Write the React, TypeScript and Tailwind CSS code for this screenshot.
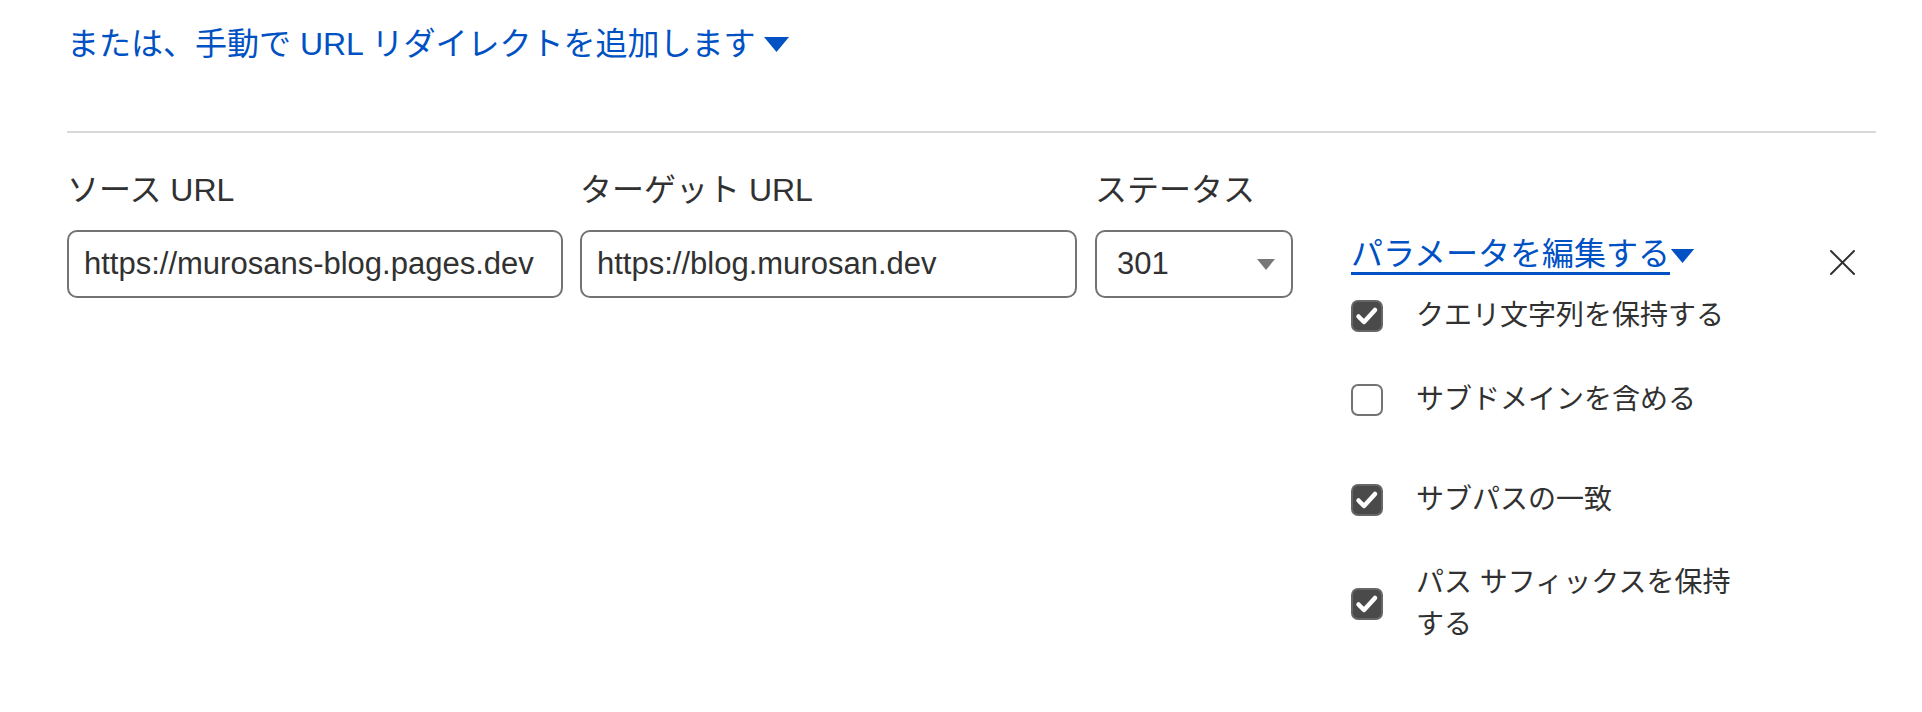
import type { ReactNode } from 'react'

function Caret({ className }: { className: string }) {
  return (
    <svg className={className} viewBox="0 0 25 15" aria-hidden="true">
      <path d="M0 0H25L12.5 15Z" fill="currentColor" />
    </svg>
  )
}

function Box({ checked }: { checked: boolean }) {
  if (!checked)
    return <span className="h-[32px] w-[32px] shrink-0 rounded-[7px] border-2 border-[#737373] bg-white" />
  return (
    <span className="flex h-[32px] w-[32px] shrink-0 items-center justify-center rounded-[7px] border-2 border-[#666] bg-[#4a4a4a]">
      <svg viewBox="0 0 28 28" className="h-[28px] w-[28px]" aria-hidden="true">
        <path
          d="M5.5 14.5L11 20L22 8"
          fill="none"
          stroke="white"
          strokeWidth="4.5"
          strokeLinecap="round"
          strokeLinejoin="round"
        />
      </svg>
    </span>
  )
}

function Option({ checked, children, className = '' }: { checked: boolean; children: ReactNode; className?: string }) {
  return (
    <label className={`flex items-center gap-[33px] ${className}`}>
      <Box checked={checked} />
      <span className="w-[340px] text-[28px] leading-[42px] text-[#313131]">{children}</span>
    </label>
  )
}

export default function App() {
  const inputCls =
    'mt-[16px] h-[68px] w-full rounded-[10px] border-2 border-[#737373] bg-white px-[15px] text-[31px] text-[#313131] outline-none'

  return (
    <div className="h-[712px] w-[1922px] overflow-hidden bg-white pl-[67px] pr-[46px] font-['Liberation_Sans','Noto_Sans_CJK_JP',sans-serif] text-[#313131]">
      <div className="pt-[20px]">
        <button type="button" className="flex items-center text-[32px] leading-[48px] text-[#0051c3]">
          または、手動で URL リダイレクトを追加します
          <Caret className="ml-[8px] h-[15px] w-[25px]" />
        </button>
      </div>

      <div className="mt-[63px] h-[2px] bg-[#d9d9d9]" />

      <div className="mt-[33px] flex items-start">
        <div className="w-[496px]">
          <div className="text-[32px] leading-[48px]">ソース URL</div>
          <input className={inputCls} defaultValue="https://murosans-blog.pages.dev" />
        </div>
        <div className="ml-[17px] w-[497px]">
          <div className="text-[32px] leading-[48px]">ターゲット URL</div>
          <input className={inputCls} defaultValue="https://blog.murosan.dev" />
        </div>
        <div className="ml-[18px] w-[198px]">
          <div className="text-[32px] leading-[48px]">ステータス</div>
          <div className="mt-[16px] flex h-[68px] items-center justify-between rounded-[10px] border-2 border-[#737373] pl-[20px] pr-[16px] text-[31px]">
            301
            <Caret className="h-[11px] w-[18px] text-[#777]" />
          </div>
        </div>

        <div className="ml-[58px] w-[478px] pt-[70px]">
          <button type="button" className="flex items-center text-[32px] leading-[36px] text-[#0051c3]">
            <span className="border-b-[3px] border-[#0051c3]">パラメータを編集する</span>
            <Caret className="h-[14px] w-[25px]" />
          </button>
          <Option checked className="mt-[20px]">クエリ文字列を保持する</Option>
          <Option checked={false} className="mt-[42px]">サブドメインを含める</Option>
          <Option checked className="mt-[58px]">サブパスの一致</Option>
          <Option checked className="mt-[41px]">パス サフィックスを保持する</Option>
        </div>

        <button type="button" className="mt-[83px]" aria-label="削除">
          <svg viewBox="0 0 27 27" className="h-[27px] w-[27px]">
            <path d="M2 2L25 25M25 2L2 25" stroke="#313131" strokeWidth="2" strokeLinecap="round" />
          </svg>
        </button>
      </div>
    </div>
  )
}
